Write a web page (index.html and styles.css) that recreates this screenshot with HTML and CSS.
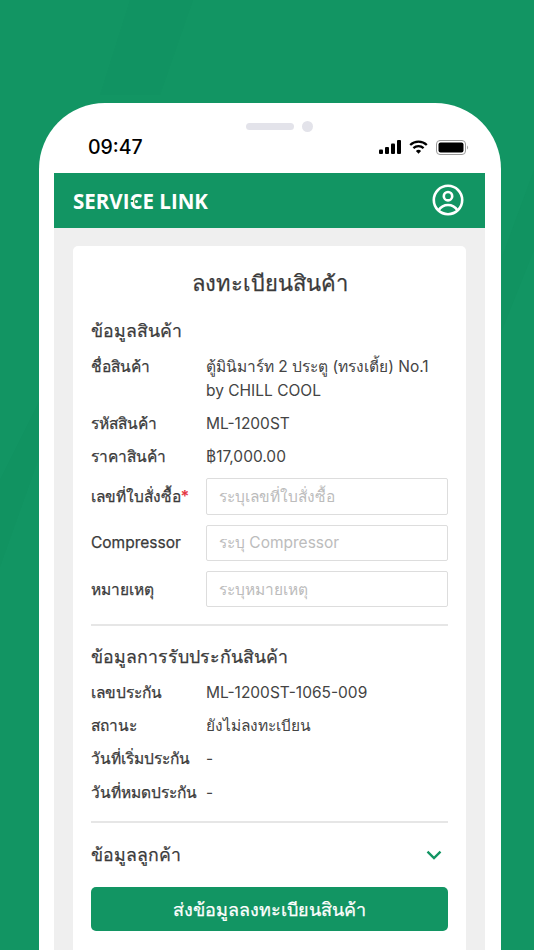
FILE: index.html
```html
<!DOCTYPE html>
<html lang="th">
<head>
<meta charset="utf-8">
<title>Service Link</title>
<link rel="stylesheet" href="styles.css">
</head>
<body>
<svg class="streaks" width="534" height="950" viewBox="0 0 534 950" aria-hidden="true">
  <path d="M193 0L160 95L100 95L130 0Z" fill="#0f8f5e" opacity=".25"/>
  <path d="M40 400L40 455L0 567L0 480Z" fill="#0f8f5e" opacity=".3"/>
  <path d="M534 170L502 257L502 330L534 250Z" fill="#0f8f5e" opacity=".3"/>
</svg>
<main class="phone">
  <div class="notch"><span class="speaker"></span><span class="camera"></span></div>
  <div class="status">
    <span class="time">09:47</span>
    <span class="status-icons">
      <svg width="22" height="14" viewBox="0 0 22 14"><rect x="0" y="9.5" width="4" height="4.5" rx="1"/><rect x="6" y="7" width="4" height="7" rx="1"/><rect x="12" y="3.5" width="4" height="10.5" rx="1"/><rect x="18" y="0" width="4" height="14" rx="1"/></svg>
      <svg width="19" height="14" viewBox="0 0 19 14" fill="none" stroke="#000" stroke-width="2.3"><path d="M1.2 5A12 12 0 0 1 17.8 5"/><path d="M4.4 8.2A7.5 7.5 0 0 1 14.6 8.2"/><path d="M9.5 13.8L6.9 11A3.7 3.7 0 0 1 12.1 11Z" fill="#000" stroke="none"/></svg>
      <svg width="33" height="15" viewBox="0 0 33 15"><rect x=".5" y=".5" width="29" height="14" rx="3.5" fill="none" stroke="#999"/><rect x="2.5" y="2.5" width="25" height="10" rx="2"/><path d="M31 5.5a2.4 2.4 0 0 1 0 4z" fill="#aaa"/></svg>
    </span>
  </div>
  <div class="screen">
    <header class="appbar">
      <span class="logo">SERVI<span class="logo-c">C</span>E LINK</span>
      <svg class="user" width="32" height="32" viewBox="0 0 32 32" fill="none" stroke="#fff" stroke-width="2.6"><circle cx="16" cy="16" r="14.2"/><circle cx="16" cy="12.2" r="4.2"/><path d="M6.4 26.4C9 22.6 12.2 21 16 21s7 1.600 9.600 5.400"/></svg>
    </header>
    <div class="content">
      <section class="card">
        <h1 class="title">ลงทะเบียนสินค้า</h1>
        <h2 class="heading heading-first">ข้อมูลสินค้า</h2>
        <div class="row"><span class="label">ชื่อสินค้า</span><span class="value">ตู้มินิมาร์ท 2 ประตู (ทรงเตี้ย) No.1 by CHILL COOL</span></div>
        <div class="row"><span class="label">รหัสสินค้า</span><span class="value">ML-1200ST</span></div>
        <div class="row"><span class="label">ราคาสินค้า</span><span class="value">฿17,000.00</span></div>
        <div class="fields">
          <label class="field"><span class="label">เลขที่ใบสั่งซื้อ<span class="req">*</span></span><input class="input" placeholder="ระบุเลขที่ใบสั่งซื้อ"></label>
          <label class="field"><span class="label">Compressor</span><input class="input" placeholder="ระบุ Compressor"></label>
          <label class="field"><span class="label">หมายเหตุ</span><input class="input" placeholder="ระบุหมายเหตุ"></label>
        </div>
        <hr class="rule">
        <h2 class="heading">ข้อมูลการรับประกันสินค้า</h2>
        <div class="row"><span class="label">เลขประกัน</span><span class="value">ML-1200ST-1065-009</span></div>
        <div class="row"><span class="label">สถานะ</span><span class="value">ยังไม่ลงทะเบียน</span></div>
        <div class="row"><span class="label">วันที่เริ่มประกัน</span><span class="value">-</span></div>
        <div class="row"><span class="label">วันที่หมดประกัน</span><span class="value">-</span></div>
        <hr class="rule rule-b">
        <div class="collapse">
          <h2 class="heading heading-flat">ข้อมูลลูกค้า</h2>
          <svg class="chev" width="16" height="10" viewBox="0 0 16 10" fill="none" stroke="#129563" stroke-width="2.400"><path d="M1.500 1.700L8 8L14.500 1.700"/></svg>
        </div>
        <button class="submit" type="button">ส่งข้อมูลลงทะเบียนสินค้า</button>
      </section>
    </div>
  </div>
</main>
</body>
</html>
```
FILE: styles.css
```css
* { box-sizing: border-box; }
html, body { margin: 0; height: 950px; overflow: hidden; }
body {
  position: relative;
  background: #129563;
  font-family: "Inter", "Noto Sans", sans-serif;
  color: #3a3a3a;
  padding-top: 103px;
}
.streaks { position: absolute; left: 0; top: 0; }
.phone {
  position: relative;
  width: 462px;
  height: 847px;
  margin-left: 39px;
  padding: 0 16px 0 15px;
  background: #fff;
  border-radius: 66px 66px 0 0;
}
.notch { display: flex; align-items: center; justify-content: center; gap: 8px; padding-top: 17px; height: 29px; margin-left: 19px; }
.speaker { width: 48px; height: 7px; border-radius: 4px; background: #e3e3ea; }
.camera { width: 11px; height: 11px; border-radius: 50%; background: #e3e3ea; }
.status { display: flex; justify-content: space-between; align-items: center; height: 40.700px; padding: 0 16px 10px 34px; }
.time { font-size: 19.500px; font-weight: 500; color: #000; }
.status-icons { display: flex; align-items: center; gap: 8px; }
.appbar {
  display: flex; align-items: center; justify-content: space-between;
  height: 55px; background: #129563; padding: 0 21px 0 19px;
}
.logo { position: relative; top: 1px; font-family: "Open Sans", sans-serif; font-weight: 700; font-size: 20.500px; color: #fff; }
.logo-c { position: relative; }
.logo-c::before {
  content: ""; position: absolute; left: 0; top: 13px; width: 4px; height: 2px; background: #129563;
}
.logo-c::after {
  content: ""; position: absolute; left: 6px; top: 12.500px; width: 3px; height: 3px; border-radius: 50%; background: #fff;
}
.user { display: block; }
.screen { background: #efefef; height: 778px; }
.content { padding: 18.500px 19px 0; }
.card { background: #fff; border-radius: 5px; padding: 20px 18px; height: 720px; }
.title { margin: 0; text-align: center; font-size: 22px; line-height: 34px; font-weight: 400; -webkit-text-stroke: .25px #3a3a3a; color: #3a3a3a; }
.heading { margin: 17px 0 0; font-size: 17.700px; line-height: 28px; font-weight: 400; -webkit-text-stroke: .25px #3a3a3a; color: #3a3a3a; }
.heading-first { margin-top: 17px; }
.heading-flat { margin: 0; }
.row { display: grid; grid-template-columns: 115px 1fr; margin-top: 9.330px; font-size: 15.500px; line-height: 24px; }
.label { font-weight: 400; -webkit-text-stroke: .25px #3a3a3a; color: #3a3a3a; }
.value { color: #444; }
.req { color: #e5323e; -webkit-text-stroke: .25px #e5323e; }
.fields { display: flex; flex-direction: column; gap: 9.700px; margin-top: 9.300px; }
.field { display: grid; grid-template-columns: 115px 1fr; align-items: center; }
.field .label { font-size: 15.500px; }
.input {
  width: 100%; height: 36.500px; border: 1px solid #ddd; border-radius: 2px;
  padding: 0 12px; font: inherit; font-size: 15.500px; color: #444; background: #fff;
}
.input::placeholder { color: #bcbcbc; }
.rule { border: 0; border-top: 2px solid #e6e6e6; margin: 17px 0 0; }
.rule-b { margin-top: 16.500px; }
.collapse { display: flex; align-items: center; justify-content: space-between; margin-top: 18px; padding-right: 6px; }
.submit {
  display: block; width: 100%; height: 43.700px; margin-top: 18px; border: 0; border-radius: 5px;
  background: #129563; color: #fff; font: inherit; font-size: 18px; font-weight: 400; -webkit-text-stroke: .25px #fff;
}
```
